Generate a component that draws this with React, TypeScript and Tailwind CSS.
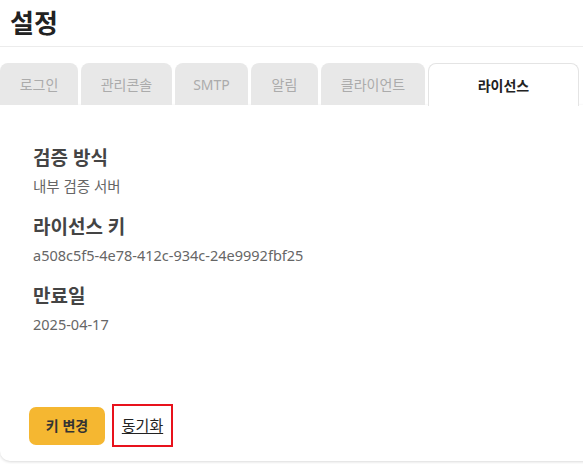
import React from 'react'

const tabs = [
  { label: '로그인', width: 'w-[78px]' },
  { label: '관리콘솔', width: 'w-[91px]' },
  { label: 'SMTP', width: 'w-[73px]' },
  { label: '알림', width: 'w-[67px]' },
  { label: '클라이언트', width: 'w-[104px]' },
]

const fields = [
  { label: '검증 방식', value: '내부 검증 서버' },
  { label: '라이선스 키', value: 'a508c5f5-4e78-412c-934c-24e9992fbf25' },
  { label: '만료일', value: '2025-04-17' },
]

export default function App() {
  return (
    <div
      className="h-[464px] w-[583px] overflow-hidden bg-white"
      style={{ fontFamily: '"Noto Sans", "Noto Sans CJK KR", sans-serif' }}
    >
      <div className="flex h-[47px] items-center border-b border-[#ececec] pl-[10px]">
        <h1 className="text-[26px] leading-none font-bold text-[#222]">설정</h1>
      </div>

      <div className="mt-[16px] flex w-[600px] gap-[3px]">
        {tabs.map(tab => (
          <div
            key={tab.label}
            className={`${tab.width} flex h-[42px] items-center justify-center rounded-t-[8px] bg-[#e8e8e8] text-[14px] text-[#ababab]`}
          >
            {tab.label}
          </div>
        ))}
        <div className="relative z-10 flex h-[43px] w-[151px] items-center justify-center rounded-t-[8px] border border-b-0 border-[#e4e4e4] bg-white text-[14px] font-bold text-[#222]">
          라이선스
        </div>
      </div>

      <div className="-mt-px flex h-[356px] w-[620px] flex-col justify-between rounded-b-[10px] bg-white pt-[40px] pb-[14px] pl-[33px] shadow-[0_1px_3px_rgba(0,0,0,0.15)]">
        <div className="flex flex-col gap-[18px]">
          {fields.map(field => (
            <div key={field.label} className="flex flex-col gap-[5px]">
              <div className="text-[19px] leading-[26px] font-bold text-[#444]">{field.label}</div>
              <div className="text-[14.5px] leading-[20px] text-[#666]">{field.value}</div>
            </div>
          ))}
        </div>

        <div className="-ml-[4px] flex items-center gap-[7px]">
          <button className="h-[38px] w-[76px] rounded-[7px] bg-[#f5b731] text-[14px] font-bold text-[#333]">
            키 변경
          </button>
          <div className="flex h-[43px] w-[61px] items-center justify-center border-2 border-[#e8121c]">
            <span className="text-[15px] text-[#222] underline underline-offset-2">동기화</span>
          </div>
        </div>
      </div>
    </div>
  )
}
